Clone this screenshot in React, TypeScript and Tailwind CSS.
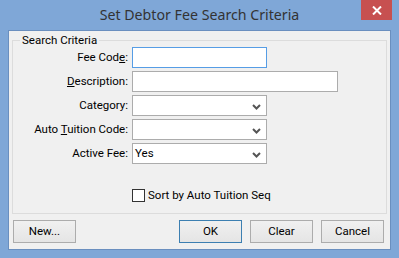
import React from "react";

const font = { fontFamily: 'Roboto, "Noto Sans", sans-serif' };

function Chevron() {
  return (
    <svg width="9" height="6" viewBox="0 0 9 6" className="absolute right-[5px] top-[8px]">
      <path d="M1 1 L4.5 4.5 L8 1" fill="none" stroke="#555" strokeWidth="2" />
    </svg>
  );
}

function Field({ width, focused, select, value }: { width: string; focused?: boolean; select?: boolean; value?: string }) {
  return (
    <div
      className={`relative h-[21px] bg-white border ${focused ? "border-[#569de5]" : "border-[#acacac]"} ${width} flex items-center pl-[2px] text-[11.5px] text-black`}
    >
      {value}
      {select && <Chevron />}
    </div>
  );
}

function Btn({ children, def }: { children: React.ReactNode; def?: boolean }) {
  return (
    <div
      className={`w-[63px] h-[23px] border ${def ? "border-[#3c7fb1]" : "border-[#acacac]"} bg-gradient-to-b from-[#f0f0f0] to-[#e5e5e5] flex items-center justify-center text-[11.5px] text-black`}
    >
      {children}
    </div>
  );
}

export default function App() {
  const rows: { label: React.ReactNode; field: React.ReactNode }[] = [
    { label: <>Fee Cod<u>e</u>:</>, field: <Field width="w-[135px]" focused /> },
    { label: <><u>D</u>escription:</>, field: <Field width="w-[206px]" /> },
    { label: <>Category:</>, field: <Field width="w-[135px]" select /> },
    { label: <>Auto <u>T</u>uition Code:</>, field: <Field width="w-[135px]" select /> },
    { label: <>Active Fee:</>, field: <Field width="w-[135px]" select value="Yes" /> },
  ];
  return (
    <div className="w-[399px] h-[258px] bg-[#7fa7d7] flex flex-col" style={font}>
      <div className="relative h-[30px] flex items-center justify-center">
        <span className="text-[#333] leading-none" style={{ fontFamily: '"Noto Sans", sans-serif', fontSize: "14.2px" }}>Set Debtor Fee Search Criteria</span>
        <div className="absolute right-[7px] top-0 w-[31px] h-[20px] bg-[#c75050] flex items-center justify-center">
          <svg width="10" height="9" viewBox="0 0 10 9">
            <path d="M1 0.5 L9 8.5 M9 0.5 L1 8.5" stroke="#fff" strokeWidth="2" />
          </svg>
        </div>
      </div>
      <div className="mx-[8px] h-[220px] bg-[#f0f0f0] border border-[#6a8fbf] flex flex-col text-[11.5px] text-black">
        <fieldset className="mx-[3px] mt-[1px] border border-[#dcdcdc] h-[182px] px-0">
          <legend className="ml-[7px] px-[2px] leading-[16px] text-black">Search Criteria</legend>
          <div className="flex flex-col gap-[3px] mt-[-1px]">
            {rows.map((r, i) => (
              <div key={i} className="flex items-center">
                <div className="w-[115px] text-right leading-none">{r.label}</div>
                <div className="ml-[4px]">{r.field}</div>
              </div>
            ))}
          </div>
          <div className="flex items-center mt-[23px] ml-[119px]">
            <div className="w-[13px] h-[13px] border border-[#333] bg-white" />
            <span className="ml-[3px]">Sort by Auto Tuition Seq</span>
          </div>
        </fieldset>
        <div className="flex mt-[6px] px-[4px] pr-[6px]">
          <Btn>New...</Btn>
          <div className="flex-1" />
          <div className="flex gap-[8px]">
            <Btn def>OK</Btn>
            <Btn>Clear</Btn>
            <Btn>Cancel</Btn>
          </div>
        </div>
      </div>
    </div>
  );
}
